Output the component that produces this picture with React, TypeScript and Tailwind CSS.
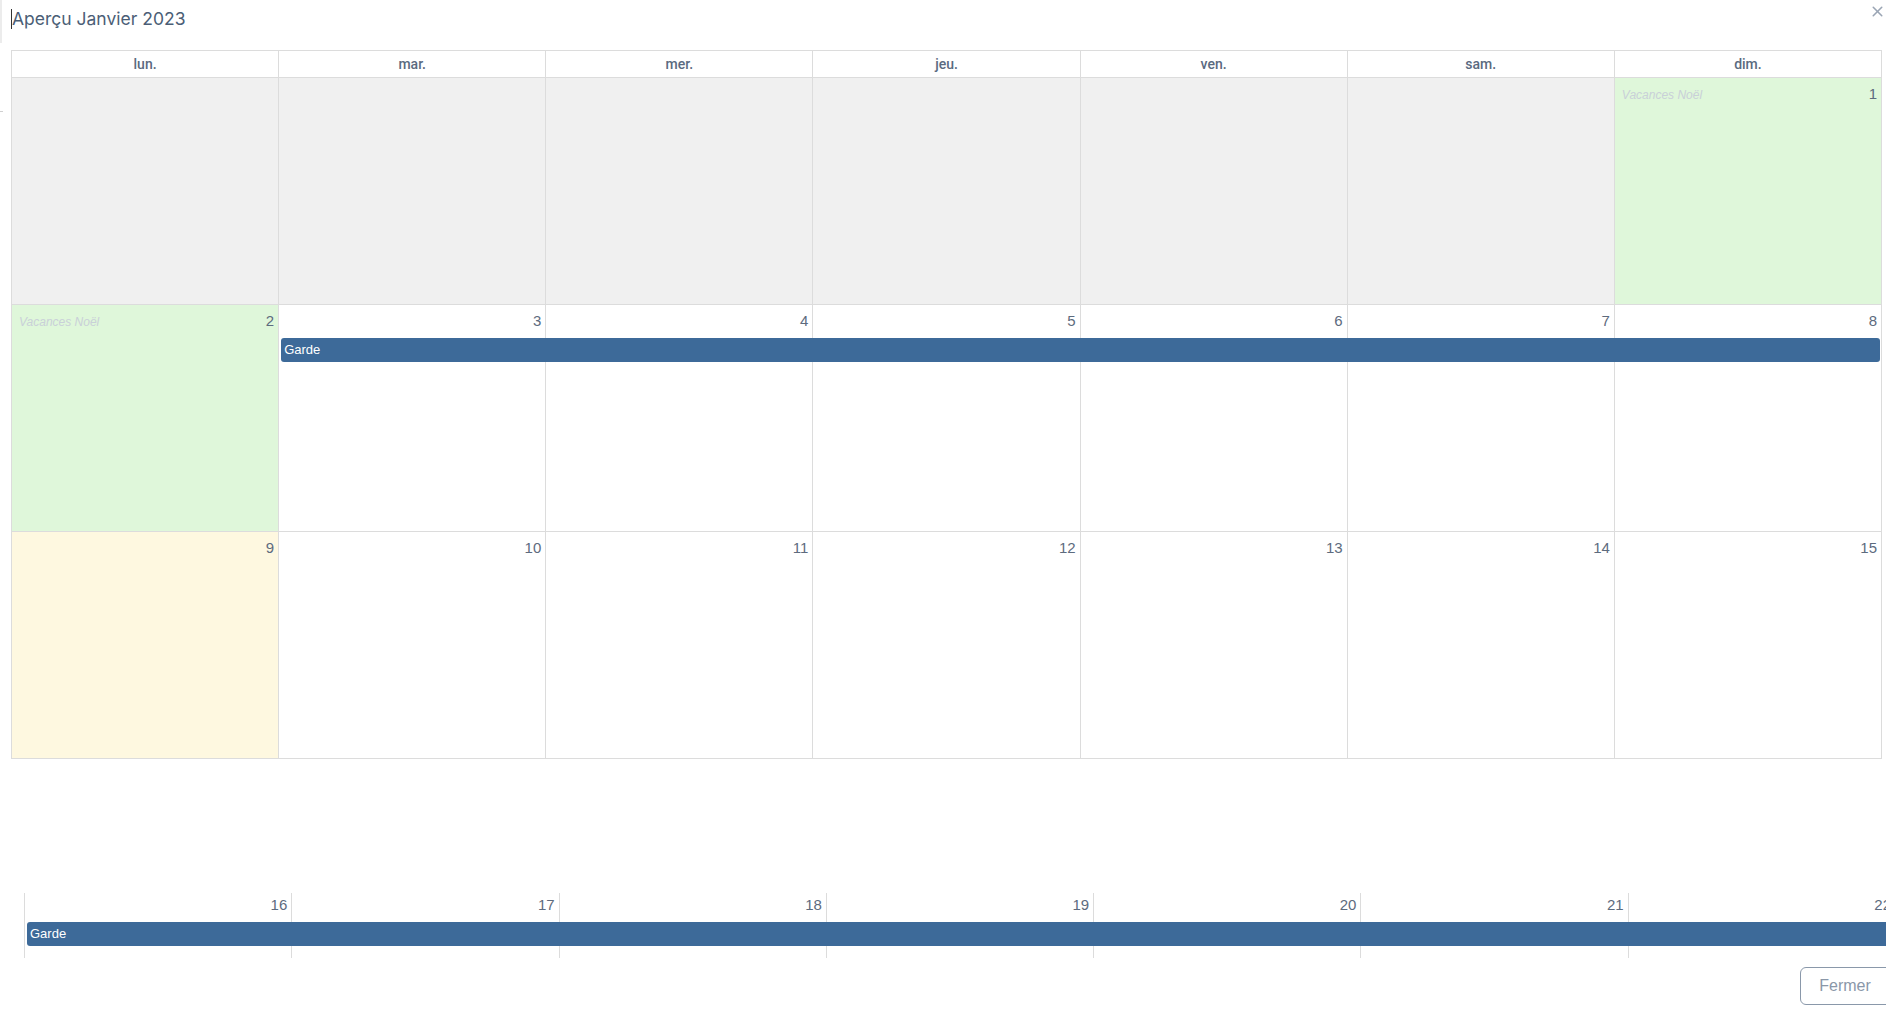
import React from 'react';
import { X } from 'lucide-react';

type Cell = {
  day?: number;
  tone: 'out' | 'holiday' | 'today' | 'normal';
  label?: string;
};

const weekDays = ['lun.', 'mar.', 'mer.', 'jeu.', 'ven.', 'sam.', 'dim.'];

const weeks: Cell[][] = [
  [
    { tone: 'out' },
    { tone: 'out' },
    { tone: 'out' },
    { tone: 'out' },
    { tone: 'out' },
    { tone: 'out' },
    { day: 1, tone: 'holiday', label: 'Vacances Noël' },
  ],
  [
    { day: 2, tone: 'holiday', label: 'Vacances Noël' },
    { day: 3, tone: 'normal' },
    { day: 4, tone: 'normal' },
    { day: 5, tone: 'normal' },
    { day: 6, tone: 'normal' },
    { day: 7, tone: 'normal' },
    { day: 8, tone: 'normal' },
  ],
  [
    { day: 9, tone: 'today' },
    { day: 10, tone: 'normal' },
    { day: 11, tone: 'normal' },
    { day: 12, tone: 'normal' },
    { day: 13, tone: 'normal' },
    { day: 14, tone: 'normal' },
    { day: 15, tone: 'normal' },
  ],
];

const toneClass = (tone: Cell['tone']) => {
  switch (tone) {
    case 'out':
      return 'bg-[#f0f0f0]';
    case 'holiday':
      return 'bg-[#dff7da]';
    case 'today':
      return 'bg-[#fef8e0]';
    default:
      return 'bg-white';
  }
};

const DayHead = ({ cell }: { cell: Cell }) => (
  <div className="flex items-start justify-between pt-[7px] pl-[7px] pr-[4px]">
    <span className="pt-[1px] text-[12px] italic leading-[18px] text-[#c9d0d8]">{cell.label ?? ''}</span>
    <span className="text-[15px] leading-[18px] text-[#5d6b7e]">{cell.day ?? ''}</span>
  </div>
);

const GardeBar = ({ className }: { className: string }) => (
  <div
    className={`row-start-1 self-start h-[24px] rounded-[3px] bg-[#3d6a99] pl-[3px] text-[13px] leading-[24px] text-white ${className}`}
  >
    Garde
  </div>
);

export default function App() {
  return (
    <div
      className="relative h-[1010px] w-[1886px] overflow-hidden bg-white"
      style={{ fontFamily: '"Liberation Sans", Arial, sans-serif' }}
    >
      <div className="absolute left-0 top-0 h-[43px] w-[2px] bg-[#ececec]" />
      <div className="absolute left-0 top-[111px] h-[1px] w-[3px] bg-[#d0d0d0]" />

      <button className="absolute right-[0px] top-[3px] text-[#9aa5b4]">
        <X size={17} strokeWidth={2.2} />
      </button>

      <div className="flex h-[50px] items-start pl-[11px] pt-[9px]">
        <span className="h-[20px] w-[1px] bg-[#333]" />
        <h1
          className="text-[17.5px] leading-[20px] text-[#4b5e76]"
          style={{ fontFamily: 'Inter, "Open Sans", sans-serif' }}
        >
          Aperçu Janvier 2023
        </h1>
      </div>

      <div className="ml-[11px] w-[1871px] border-l border-t border-[#dcdcdc]">
        <div className="grid grid-cols-7">
          {weekDays.map((d) => (
            <div
              key={d}
              className="flex h-[27px] items-center justify-center border-b border-r border-[#dcdcdc] text-[14px] font-medium text-[#5a6a80]"
              style={{ fontFamily: 'Roboto, "Liberation Sans", sans-serif' }}
            >
              {d}
            </div>
          ))}
        </div>

        {weeks.map((week, wi) => (
          <div key={wi} className="grid grid-cols-7">
            {week.map((cell, ci) => (
              <div
                key={ci}
                className={`row-start-1 h-[227px] border-b border-r border-[#dcdcdc] ${toneClass(cell.tone)}`}
                style={{ gridColumnStart: ci + 1 }}
              >
                {(cell.day || cell.label) && <DayHead cell={cell} />}
              </div>
            ))}
            {wi === 1 && <GardeBar className="col-start-2 col-span-6 mt-[33px] ml-[2px] mr-[2px]" />}
          </div>
        ))}
      </div>

      <div className="mt-[134px] ml-[24px] grid w-[1871px] grid-cols-7">
        {[16, 17, 18, 19, 20, 21, 22].map((d, i) => (
          <div
            key={d}
            className="row-start-1 h-[65px] border-l border-[#dcdcdc]"
            style={{ gridColumnStart: i + 1 }}
          >
            <div className="flex justify-end pt-[3px] pr-[4px]">
              <span className="text-[15px] leading-[18px] text-[#5d6b7e]">{d}</span>
            </div>
          </div>
        ))}
        <GardeBar className="col-start-1 col-span-7 mt-[29px] ml-[3px]" />
      </div>

      <div className="mt-[9px] flex justify-end">
        <button className="mr-[-20px] h-[38px] w-[106px] rounded-[6px] border border-[#8a98aa] pr-[16px] text-[16px] text-[#8a97a8]">
          Fermer
        </button>
      </div>
    </div>
  );
}
